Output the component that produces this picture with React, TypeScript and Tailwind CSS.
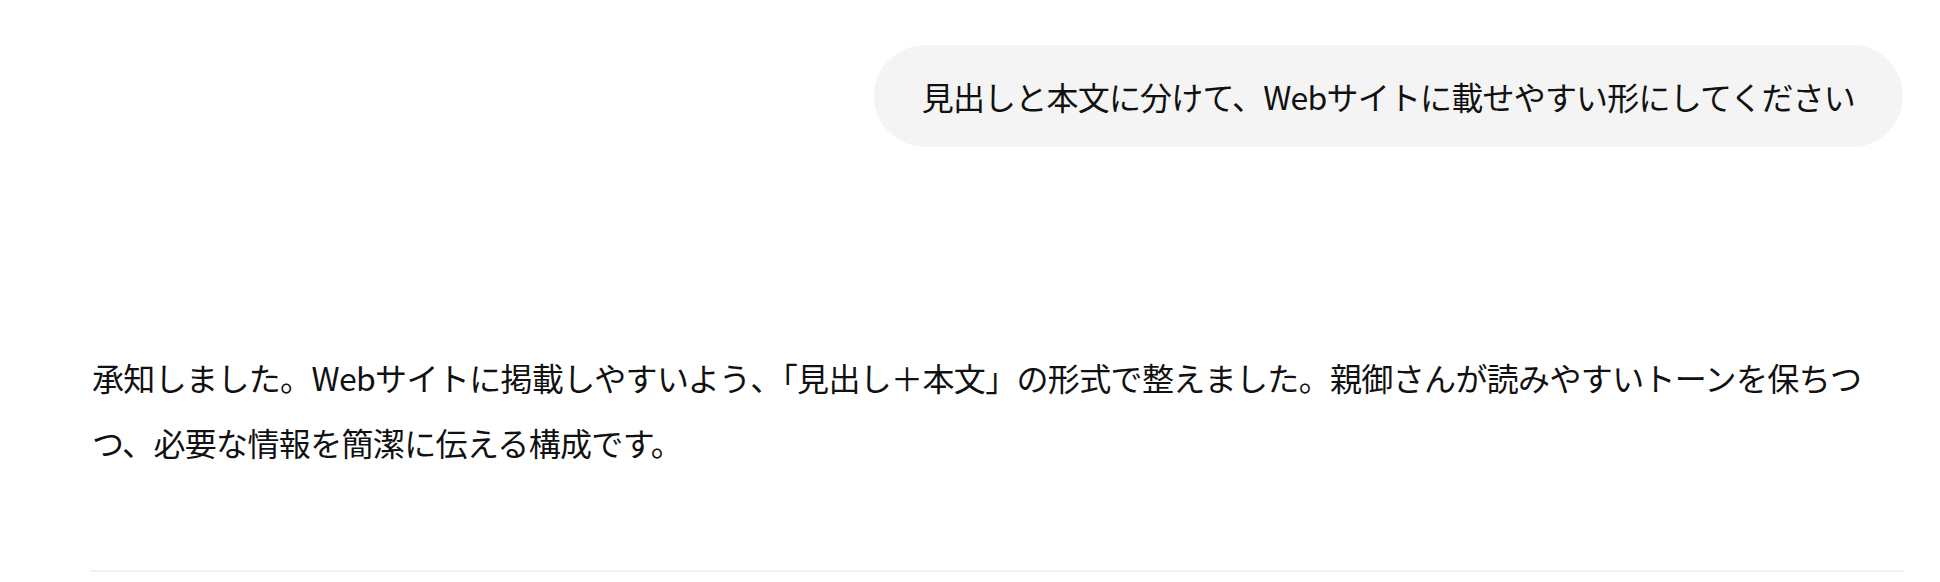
import React from "react";

const font = { fontFamily: '"Noto Sans CJK JP", "Noto Sans", sans-serif' };

const App = () => {
  return (
    <main className="min-h-screen w-full bg-white text-[#111111]" style={font}>
      <div className="flex flex-col pl-[90px] pr-[37px] pt-[45px]">
        <div className="flex justify-end">
          <div className="flex h-[102px] items-center rounded-full bg-[#f4f4f4] px-[48px] text-[32px] leading-[40px] tracking-[-0.8px]">
            見出しと本文に分けて、Webサイトに載せやすい形にしてください
          </div>
        </div>
        <p className="mt-[198px] pl-[2px] text-[32px] leading-[65px] tracking-[-0.65px]">
          承知しました。Webサイトに掲載しやすいよう、「見出し＋本文」の形式で整えました。親御さんが読みやすいトーンを保ちつつ、必要な情報を簡潔に伝える構成です。
        </p>
        <div className="mt-[95px] h-[2px] w-full bg-[#f2f2f2]" />
      </div>
    </main>
  );
};

export default App;
